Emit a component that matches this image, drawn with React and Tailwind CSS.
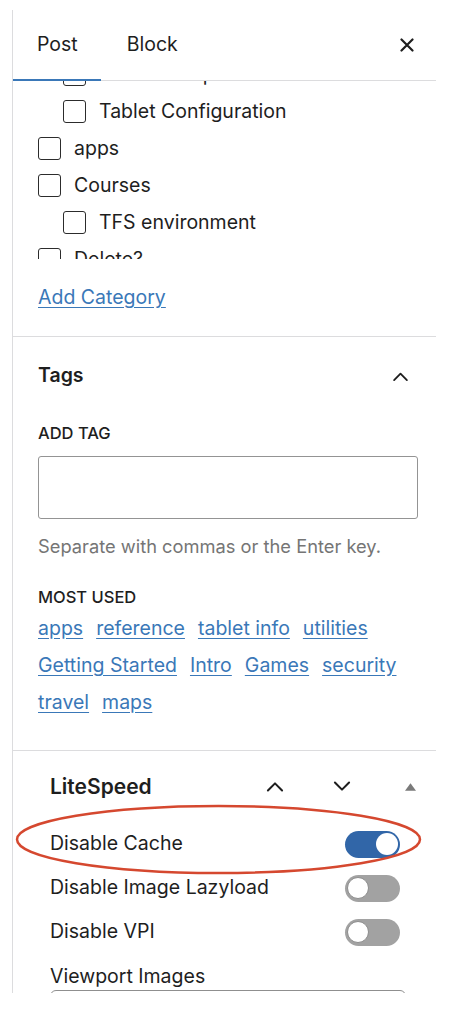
import { useState } from 'react'

/* ── small pieces ── */
function Check({ label, level = 0 }) {
  return (
    <div className={`h-[37px] flex items-center gap-[13px] ${level ? 'pl-[50px]' : 'pl-[25px]'}`}>
      <span className="w-[23px] h-[23px] shrink-0 rounded-[3px] border-[1.5px] border-[#2c2c2c] bg-white" />
      <span className="text-[19.5px] text-[#1e1e1e]">{label}</span>
    </div>
  )
}

function Chevron({ dir = 'up', className = '' }) {
  return (
    <svg viewBox="0 0 24 14" className={className} fill="none" stroke="#1e1e1e" strokeWidth="2.6" strokeLinecap="round" strokeLinejoin="round">
      {dir === 'up' ? <path d="M3 12 L12 3 L21 12" /> : <path d="M3 2 L12 11 L21 2" />}
    </svg>
  )
}

function Toggle({ on, onClick }) {
  return (
    <button
      onClick={onClick}
      className={`w-[55px] h-[27px] rounded-full flex items-center px-[2px] ${on ? 'bg-[#3166a8] justify-end' : 'bg-[#a2a2a2] justify-start'}`}
    >
      <span className={`w-[22px] h-[22px] rounded-full bg-white ${on ? '' : 'border border-[#8d8d8d]'}`} />
    </button>
  )
}

const tagRows = [
  ['apps', 'reference', 'tablet info', 'utilities'],
  ['Getting Started', 'Intro', 'Games', 'security'],
  ['travel', 'maps'],
]

export default function App() {
  const [tab, setTab] = useState('Post')
  const [opts, setOpts] = useState({ cache: true, lazy: false, vpi: false })
  const flip = k => setOpts(o => ({ ...o, [k]: !o[k] }))

  return (
    <div className="relative w-[457px] h-[1024px] bg-white font-['Inter',sans-serif] text-[#1e1e1e] overflow-hidden">
      <div className="ml-3 mt-[10px] w-[424px] h-[983px] border-l border-[#dcdcde] overflow-hidden">

        {/* Tab header */}
        <div className="h-[71px] flex items-center border-b border-[#dcdcde] relative">
          {['Post', 'Block'].map(t => (
            <button
              key={t}
              onClick={() => setTab(t)}
              className={`relative h-full text-[19.5px] text-[#1e1e1e] ${t === 'Post' ? 'pl-[24px] pr-[23px]' : 'pl-[26px] pr-6'}`}
            >
              {t}
              {tab === t && <span className="absolute left-0 right-0 -bottom-px h-[2px] bg-[#3a78b8]" />}
            </button>
          ))}
          <button className="ml-auto mr-[22px] w-[14px] h-[14px]">
            <svg viewBox="0 0 14 14" className="w-[14px] h-[14px]" stroke="#1e1e1e" strokeWidth="2.2" strokeLinecap="round">
              <path d="M1.5 1.5 L12.5 12.5 M12.5 1.5 L1.5 12.5" />
            </svg>
          </button>
        </div>

        {/* Categories */}
        <div className="border-b border-[#dcdcde] pb-[20px]">
          <div className="h-[178px] overflow-hidden">
            <div className="-mt-[25px]">
              <Check label="Tablet Setup" level={1} />
              <Check label="Tablet Configuration" level={1} />
              <Check label="apps" />
              <Check label="Courses" />
              <Check label="TFS environment" level={1} />
              <Check label="Delete?" />
            </div>
          </div>
          <div className="mt-[20px] h-[37px] flex items-center pl-[25px]">
            <a href="#" className="text-[19.5px] text-[#3a78b8] underline underline-offset-[3px]">Add Category</a>
          </div>
        </div>

        {/* Tags */}
        <div className="border-b border-[#dcdcde] pb-[29px]">
          <div className="h-[78px] flex items-center justify-between pl-[25px] pr-[27px]">
            <h2 className="text-[19.5px] font-semibold">Tags</h2>
            <Chevron dir="up" className="w-[17px] h-[11px]" />
          </div>
          <div className="pl-[25px]">
            <p className="mt-[8px] leading-[20px] text-[16.5px] font-medium uppercase">Add Tag</p>
            <input className="mt-[13px] block h-[63px] w-[380px] rounded-[3px] border-[1.5px] border-[#949494] px-3 outline-none" />
            <p className="mt-[17px] leading-[20px] text-[18.3px] text-[#757575]">Separate with commas or the Enter key.</p>
            <p className="mt-[31px] leading-[20px] text-[16.5px] font-medium uppercase">Most used</p>
            <div className="mt-[3px]">
              {tagRows.map((row, i) => (
                <div key={i} className="h-[37px] flex items-center gap-[13px]">
                  {row.map(t => (
                    <a key={t} href="#" className="text-[19.5px] text-[#3a78b8] underline underline-offset-[3px]">{t}</a>
                  ))}
                </div>
              ))}
            </div>
          </div>
        </div>

        {/* LiteSpeed */}
        <div className="pl-[37px] pr-[20px]">
          <div className="h-[71px] flex items-center">
            <h2 className="text-[21px] font-semibold">LiteSpeed</h2>
            <Chevron dir="up" className="ml-auto mr-[47px] w-[20px] h-[11px]" />
            <Chevron dir="down" className="mr-[53px] w-[20px] h-[11px]" />
            <svg viewBox="0 0 12 8" className="w-[11px] h-[8px]"><path d="M6 0 L12 8 L0 8 Z" fill="#7a7a7a" /></svg>
          </div>
          <div className="pr-[16px]">
            {[
              ['cache', 'Disable Cache'],
              ['lazy', 'Disable Image Lazyload'],
              ['vpi', 'Disable VPI'],
            ].map(([k, label]) => (
              <div key={k} className="h-[44px] flex items-center justify-between">
                <span className="text-[19.5px]">{label}</span>
                <Toggle on={opts[k]} onClick={() => flip(k)} />
              </div>
            ))}
            <p className="mt-[10px] leading-[24px] text-[19.5px]">Viewport Images</p>
            <div className="mt-[2px] h-[40px] w-[356px] rounded-[6px] border-[1.5px] border-[#8f8f8f]" />
          </div>
        </div>
      </div>

      {/* annotation ellipse */}
      <svg className="absolute left-0 top-0 pointer-events-none" width="457" height="1024">
        <ellipse cx="218.5" cy="839.5" rx="201.5" ry="33.5" fill="none" stroke="#d5482f" strokeWidth="2.5" />
      </svg>
    </div>
  )
}
